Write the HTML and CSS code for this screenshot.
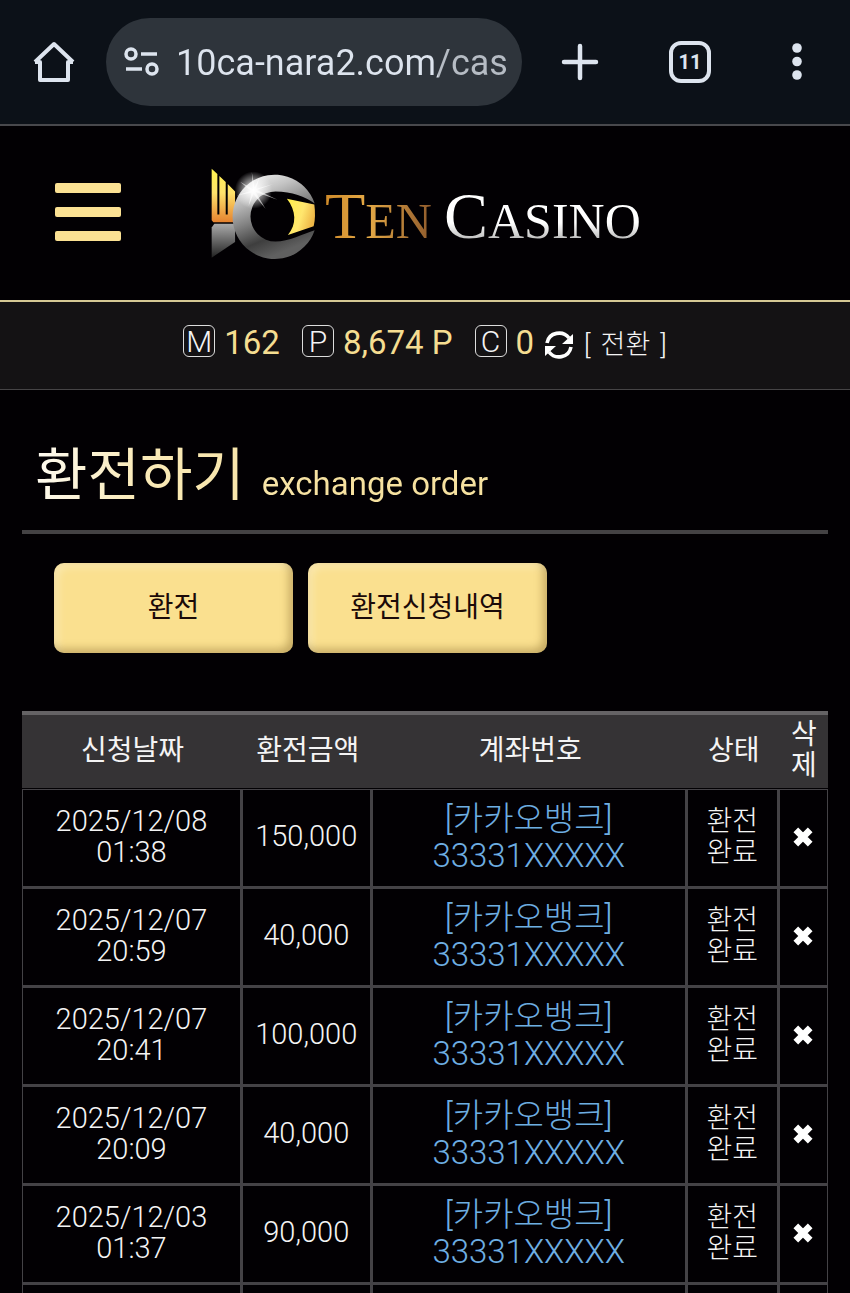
FILE: index.html
```html
<!DOCTYPE html>
<html lang="ko">

<head>
	<meta charset="UTF-8">
	<meta name="viewport" content="width=device-width, initial-scale=1.0">
	<title>환전하기 - Ten Casino</title>
	<link rel="stylesheet" href="styles.css">
</head>

<body>

	<nav class="toolbar">
		<button type="button" class="tool" aria-label="Home">
			<svg width="42" height="42" viewBox="0 0 42 42" fill="none" stroke="#dde4ee" stroke-width="4" stroke-linejoin="round"><path d="M2 21h5v18h28V21h5M2 21L21 3l19 18"/></svg>
		</button>
		<div class="address">
			<svg width="36" height="30" viewBox="0 0 36 30" fill="none" stroke="#dde4ee" stroke-width="3.5"><circle cx="7" cy="7" r="5"/><path d="M17 7h16M2 22h16"/><circle cx="28" cy="22" r="5"/></svg>
			<input type="text" id="url" aria-label="Address" value="10ca-nara2.com/cas">
		</div>
		<div class="tools">
			<button type="button" class="tool" aria-label="New tab">
				<svg width="42" height="42" viewBox="0 0 42 42" stroke="#dde4ee" stroke-width="4.5" stroke-linecap="round"><path d="M21 5v32M5 21h32"/></svg>
			</button>
			<button type="button" class="tool tabs" aria-label="Tabs">11</button>
			<button type="button" class="tool more" aria-label="More">
				<svg width="10" height="42" viewBox="0 0 10 42" fill="#dde4ee"><circle cx="5" cy="7" r="4.8"/><circle cx="5" cy="20.500" r="4.8"/><circle cx="5" cy="34" r="4.8"/></svg>
			</button>
		</div>
	</nav>

	<header class="header">
		<button type="button" class="menu" aria-label="Menu"><span></span><span></span><span></span></button>
		<a href="#" class="logo">
			<svg width="107" height="107" viewBox="30 30 320 320">
				<defs>
					<linearGradient id="gold" x1="0" y1="0" x2="0" y2="1">
						<stop offset="0" stop-color="#fff34f"/><stop offset=".45" stop-color="#ffe36c"/><stop offset="1" stop-color="#e5822f"/>
					</linearGradient>
					<linearGradient id="silver" x1="0" y1="0" x2="0" y2="1">
						<stop offset="0" stop-color="#aaa"/><stop offset="1" stop-color="#222"/>
					</linearGradient>
					<linearGradient id="ring" x1="0" y1="0" x2=".4" y2="1">
						<stop offset="0" stop-color="#fff"/><stop offset=".3" stop-color="#c4c4c4"/><stop offset=".55" stop-color="#858585"/><stop offset=".8" stop-color="#3e3e3e"/><stop offset="1" stop-color="#606060"/>
					</linearGradient>
					<linearGradient id="iris" x1="0" y1="0" x2="1" y2=".4">
						<stop offset="0" stop-color="#ffef49"/><stop offset=".6" stop-color="#ffe66e"/><stop offset="1" stop-color="#eeb747"/>
					</linearGradient>
					<radialGradient id="flare">
						<stop offset="0" stop-color="#fff"/><stop offset=".25" stop-color="#fff" stop-opacity=".8"/><stop offset="1" stop-color="#fff" stop-opacity="0"/>
					</radialGradient>
				</defs>
				<path fill="url(#gold)" d="M35 56l17 16v121h6V78l19 18v97h6v-91l22 22v92H40l-5-6z"/>
				<path fill="url(#silver)" d="M35 232l8-11h62v54l-70 47z"/>
				<path fill="url(#ring)" d="M343 160C315 140 275 124 226 124A75 75 0 0 0 226 274C265 274 310 250 343 240A126 126 0 1 1 343 160Z"/>
				<path fill="url(#iris)" d="M260 146l82 17q5 37-2 65l-77 26c27-32 25-72-3-108z"/>
				<circle cx="160" cy="120" r="56" fill="url(#flare)"/>
				<path fill="#fff" opacity=".6" d="M155 66l8 46 15-30-10 34 52-14-50 18 62 29-66-23 30 50-36-44-15 36 9-40-44 8 42-14-32-27 38 22z"/>
			</svg>
			<span class="logo-text"><span class="ten">T<small>EN</small></span><span class="casino">C<small>ASINO</small></span></span>
		</a>
	</header>

	<section class="balance">
		<div class="money"><i>M</i><b>162</b></div>
		<div class="money point"><i>P</i><b>8,674 P</b></div>
		<div class="money point"><i>C</i><b>0</b></div>
		<button type="button" class="refresh" aria-label="Refresh">
			<svg width="30" height="30" viewBox="0 0 30 30"><path d="M3 13C5 2 19 0 25 8M27 17C25 28 11 30 5 22" fill="none" stroke="#fff" stroke-width="3.600"/><path d="M29 4v10H18zM1 26V16h11z" fill="#fff"/></svg>
		</button>
		<a href="#" class="convert">[<span>전환</span>]</a>
	</section>

	<main class="content">
		<h1 class="title">환전하기<span>exchange order</span></h1>

		<div class="buttons">
			<button type="button">환전</button>
			<button type="button">환전신청내역</button>
		</div>

		<table class="list">
			<colgroup>
				<col class="col-date">
				<col class="col-amount">
				<col class="col-account">
				<col class="col-state">
				<col class="col-delete">
			</colgroup>
			<thead>
				<tr>
					<th>신청날짜</th>
					<th>환전금액</th>
					<th>계좌번호</th>
					<th>상태</th>
					<th>삭<br>제</th>
				</tr>
			</thead>
			<tbody id="orders"></tbody>
		</table>
	</main>

	<script>

		const orders = [
			['2025/12/08', '01:38', '150,000'],
			['2025/12/07', '20:59', '40,000'],
			['2025/12/07', '20:41', '100,000'],
			['2025/12/07', '20:09', '40,000'],
			['2025/12/03', '01:37', '90,000']
		];

		const rows = orders.map(function (order) {
			return `<tr>
				<td>${order[0]}<br>${order[1]}</td>
				<td>${order[2]}</td>
				<td class="account">[카카오뱅크]<br>33331XXXXX</td>
				<td class="state">환전<br>완료</td>
				<td><button type="button" class="delete" aria-label="삭제"><svg width="24" height="24" viewBox="0 0 20 20"><path d="M4 4l12 12M16 4L4 16" stroke="#fff" stroke-width="5.500"/></svg></button></td>
			</tr>`;
		});

		// empty row that closes the list
		rows.push('<tr class="rest"><td></td><td></td><td></td><td></td><td></td></tr>');

		document.getElementById('orders').innerHTML = rows.join('');

	</script>

</body>

</html>
```
FILE: styles.css
```css
* {
	box-sizing: border-box;
}

body {
	margin: 0;
	background-color: #020003;
	color: #f4f4f4;
	font-family: Roboto, "Noto Sans CJK KR", sans-serif;
	font-weight: 300;
}

button {
	padding: 0;
	border: none;
	background: none;
	color: inherit;
	font-family: inherit;
	cursor: pointer;
}

svg {
	display: block;
	flex: none;
}

a {
	color: inherit;
	text-decoration: none;
}

/* browser toolbar */
.toolbar {
	display: flex;
	align-items: center;
	height: 126px;
	padding: 0 35px 0 33px;
	background-color: #0c1118;
	border-bottom: 2px solid #48484c;
}

.tool {
	width: 42px;
	height: 42px;
	flex: none;
}

.address {
	display: flex;
	align-items: center;
	gap: 16px;
	flex: 1;
	min-width: 0;
	height: 88px;
	margin-left: 31px;
	padding: 0 14px 0 18px;
	border-radius: 44px;
	background-color: #2e343b;
}

.address input {
	flex: 1;
	min-width: 0;
	padding: 2px 0 0;
	border: none;
	outline: none;
	background: linear-gradient(90deg, #dde4ee 262px, #b6bcc4 262px);
	-webkit-background-clip: text;
	background-clip: text;
	color: transparent;
	font-family: Roboto, sans-serif;
	font-size: 36px;
	font-weight: 400;
}

.tools {
	display: flex;
	align-items: center;
	gap: 68px;
	padding-left: 37px;
}

.tabs {
	border: 4px solid #dde4ee;
	border-radius: 12px;
	color: #dde4ee;
	font-size: 20px;
	font-weight: 700;
}

.more {
	display: flex;
	justify-content: center;
	width: 36px;
}

/* site header */
.header {
	display: flex;
	align-items: center;
	gap: 89px;
	height: 174px;
	padding: 0 55px;
}

.menu {
	display: flex;
	flex-direction: column;
	gap: 14px;
	width: 66px;
	margin-bottom: 3px;
}

.menu span {
	height: 10px;
	border-radius: 2px;
	background-color: #fbe193;
}

.logo {
	display: flex;
	align-items: center;
	gap: 8px;
}

.logo-text {
	display: flex;
	gap: 12px;
	padding-top: 10px;
	font-family: "Liberation Serif", serif;
	font-size: 66px;
	font-weight: 400;
	line-height: 80px;
}

.logo-text small {
	font-size: 50px;
}

.ten,
.casino {
	-webkit-background-clip: text;
	background-clip: text;
	color: transparent;
}

.ten {
	background-image: linear-gradient(90deg, #cf8a2a, #e5a946 40%, #8f5a2c);
}

.casino {
	background-image: linear-gradient(180deg, #fff 55%, #999 85%);
}

/* balance bar */
.balance {
	display: flex;
	align-items: center;
	justify-content: center;
	height: 90px;
	padding-bottom: 6px;
	background-color: #141214;
	border-top: 2px solid #d5c894;
	border-bottom: 1px solid #464446;
}

.money {
	display: flex;
	align-items: center;
	gap: 9px;
}

.point {
	margin-left: 22px;
}

.money i {
	width: 32px;
	height: 32px;
	margin-bottom: 4px;
	border: 1px solid #ddd;
	border-radius: 6px;
	font-size: 30px;
	font-style: normal;
	font-weight: 300;
	line-height: 31px;
	text-align: center;
}

.money b {
	color: #f5dd91;
	font-size: 33px;
	font-weight: 400;
}

.refresh {
	margin: 4px 10px 0;
}

.convert {
	font-size: 27px;
}

.convert span {
	padding: 0 10px;
}

/* page content */
.content {
	padding: 0 22px;
}

.title {
	margin: 0;
	padding: 41px 13px 1px;
	border-bottom: 4px solid #444244;
	background: linear-gradient(100deg, #fff 0, #faeab8 130px, #f6e1a0 320px);
	-webkit-background-clip: text;
	background-clip: text;
	color: transparent;
	font-size: 57px;
	font-weight: 400;
	line-height: 90px;
}

.title span {
	margin-left: 17px;
	font-size: 33px;
}

.buttons {
	display: flex;
	gap: 15px;
	padding: 29px 32px 58px;
}

.buttons button {
	width: 239px;
	height: 90px;
	padding-bottom: 6px;
	border-radius: 10px;
	background-color: #fae08f;
	box-shadow: inset -4px -4px 8px rgba(120, 90, 30, 0.4), inset 4px 4px 8px rgba(255, 255, 255, 0.3);
	color: #1b0a08;
	font-size: 28px;
	font-weight: 400;
}

.list {
	width: 100%;
	border-spacing: 0;
	table-layout: fixed;
	font-size: 29px;
	line-height: 31px;
	text-align: center;
}

.col-date {
	width: 27.4%;
}

.col-amount {
	width: 16.1%;
}

.col-account {
	width: 39.1%;
}

.col-state {
	width: 11.4%;
}

.col-delete {
	width: 6%;
}

.list th {
	height: 78px;
	padding: 0 0 3px;
	border-top: 4px solid #656365;
	border-bottom: 1px solid #020003;
	background-color: #353335;
	font-size: 28px;
	font-weight: 400;
}

.list td {
	height: 99px;
	padding: 0 0 3px;
	border-right: 3px solid #444246;
	border-bottom: 3px solid #444246;
}

.list td:first-child {
	border-left: 1px solid #444246;
}

.list td:last-child {
	border-right-width: 1px;
}

.list tbody tr:first-child td {
	height: 100px;
	border-top: 1px solid #444246;
}

.list .rest td {
	height: 8px;
	border-bottom: none;
}

.list .account {
	color: #6eaee2;
	font-size: 33px;
	line-height: 37px;
}

.list .state {
	font-size: 28px;
}

.delete {
	display: flex;
	margin: 0 auto;
}
```
